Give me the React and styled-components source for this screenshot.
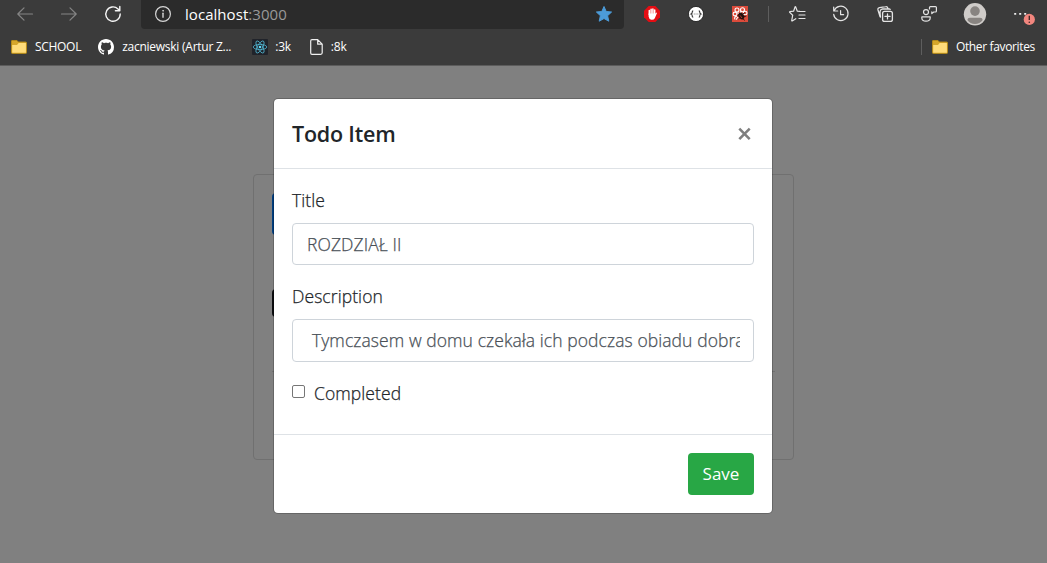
import React from "react";
import styled, { createGlobalStyle } from "styled-components";

const GlobalStyle = createGlobalStyle`
  * { box-sizing: border-box; }
  body {
    margin: 0;
    overflow: hidden;
    background: #808080;
    font-family: "Open Sans", "Noto Sans", sans-serif;
  }
`;

const Screen = styled.div`
  width: 1047px;
  height: 563px;
  display: flex;
  flex-direction: column;
  overflow: hidden;
`;

const Chrome = styled.header`
  height: 66px;
  flex: none;
  background: #3b3b3b;
  border-bottom: 1px solid #5c5c5c;
`;

const Toolbar = styled.div`
  height: 29px;
  display: flex;
  align-items: flex-start;
`;

const Slot = styled.span`
  width: ${(p) => p.$w}px;
  height: 28px;
  flex: none;
  display: flex;
  align-items: center;
  justify-content: center;
  svg { display: block; overflow: visible; }
`;

const NavGroup = styled.div`
  display: flex;
  width: 141px;
  padding-left: 3px;
`;

const AddressBar = styled.div`
  width: 483px;
  height: 29px;
  display: flex;
  align-items: center;
  padding: 0 0 1px 14px;
  background: #2b2b2b;
  border-radius: 0 0 4px 4px;
`;

const Url = styled.span`
  flex: 1;
  margin-left: 14px;
  font-size: 15px;
  line-height: 28px;
  letter-spacing: 0.05px;
  color: #fff;
  white-space: nowrap;
`;

const Port = styled.span`
  color: #999;
`;

const ToolGroup = styled.div`
  display: flex;
  padding-left: 6px;
`;

const Divider = styled.i`
  width: 1px;
  height: 16px;
  flex: none;
  background: #5e5e5e;
`;

const Bookmarks = styled.nav`
  height: 36px;
  display: flex;
  align-items: center;
  padding: 0 12px 0 11px;
  color: #fff;
`;

const Bookmark = styled.span`
  display: flex;
  align-items: center;
  gap: ${(p) => p.$gap ?? 8}px;
  margin-right: ${(p) => p.$after ?? 0}px;
  font-size: 12px;
  line-height: 16px;
  letter-spacing: ${(p) => p.$ls ?? 0}px;
  white-space: nowrap;
  svg { display: block; flex: none; }
`;

const Spacer = styled.span`
  flex: 1;
`;

const Page = styled.main`
  position: relative;
  flex: 1;
  padding: 108px 0 0 253px;
`;

const Card = styled.section`
  width: 541px;
  height: 286px;
  padding: 18px 18px 0;
  border: 1px solid #707070;
  border-radius: 4px;
`;

const AddTask = styled.div`
  width: 100px;
  height: 42px;
  border-radius: 4px;
  background: #003e80;
`;

const Tab = styled.div`
  width: 100px;
  height: 28px;
  margin-top: 54px;
  border-radius: 4px;
  background: #0a0c0e;
`;

const Rule = styled.div`
  height: 1px;
  margin-top: 54px;
  background: #707070;
`;

const Dialog = styled.div`
  position: absolute;
  top: 32px;
  left: 273px;
  width: 500px;
  height: 416px;
  display: flex;
  flex-direction: column;
  background: #fff;
  background-clip: padding-box;
  border: 1px solid rgba(0, 0, 0, 0.2);
  border-radius: 5px;
  color: #212529;
`;

const DialogHeader = styled.div`
  height: 70px;
  display: flex;
  align-items: center;
  justify-content: space-between;
  padding: 0 20px 0 18px;
  border-bottom: 1px solid #dee2e6;
`;

const Heading = styled.h5`
  margin: 0;
  font-size: 21.5px;
  line-height: 32px;
  font-weight: 600;
  letter-spacing: -0.2px;
`;

const DialogBody = styled.div`
  height: 265px;
  padding: 18px 18px 0;
  font-size: 17.5px;
  font-weight: 300;
  letter-spacing: 0.08px;
  -webkit-text-stroke: 0.25px currentColor;
`;

const Label = styled.label`
  display: block;
  height: 27px;
  margin-bottom: 9px;
  line-height: 27px;
`;

const Field = styled.div`
  height: ${(p) => p.$h ?? 42}px;
  margin-bottom: 18px;
  padding: 0 13px 0 14px;
  border: 1px solid #ced4da;
  border-radius: 4px;
`;

const Value = styled.div`
  overflow: hidden;
  padding-left: ${(p) => p.$indent ?? 0}px;
  line-height: 41px;
  color: #495057;
  white-space: pre;
`;

const CheckRow = styled.label`
  display: flex;
  align-items: center;
  height: 27px;
  line-height: 25px;
`;

const Box = styled.span`
  width: 13px;
  height: 13px;
  margin: 0 9px 5px 0;
  border: 1px solid #767676;
  border-radius: 2px;
`;

const DialogFooter = styled.div`
  flex: 1;
  display: flex;
  align-items: center;
  justify-content: flex-end;
  padding: 0 18px;
  border-top: 1px solid #dee2e6;
`;

const SaveButton = styled.button`
  width: 66px;
  height: 42px;
  padding: 0;
  border: 0;
  border-radius: 4px;
  background: #28a745;
  color: #fff;
  font: 17px/40px "Open Sans", sans-serif;
  letter-spacing: 0;
`;

const line = { fill: "none", stroke: "#e4e4e4", strokeWidth: 1.2, strokeLinecap: "round", strokeLinejoin: "round" };

const Arrow = ({ flip }) => (
  <svg width="16" height="14" viewBox="0 0 16 14" {...line} stroke="#858585" transform={flip ? "scale(-1 1)" : undefined}>
    <path d="M15.5 7H.8M7 .8.8 7 7 13.2" />
  </svg>
);

const Reload = () => (
  <svg width="16" height="16" viewBox="0 0 16 16" {...line} strokeWidth="1.4" stroke="#f5f5f5">
    <path d="M15.2 8A7.2 7.2 0 1 1 13 2.9L14.6 4.6M14.8.4V4.8H10.4" />
  </svg>
);

const Info = () => (
  <svg width="16" height="16" viewBox="0 0 16 16" {...line} stroke="#d6d6d6">
    <circle cx="8" cy="8" r="7.4" />
    <path d="M8 7.2V11.2" strokeWidth="1.4" />
    <circle cx="8" cy="4.8" r=".45" fill="#d6d6d6" strokeWidth=".8" />
  </svg>
);

const Star = () => (
  <svg width="16" height="16" viewBox="0 0 16 16">
    <path d="M8 .5 10.2 5.5 15.6 6 11.6 9.7 12.8 15.2 8 12.5 3.2 15.2 4.4 9.7.4 6 5.8 5.5Z" fill="#4c9bd8" stroke="#4c9bd8" strokeLinejoin="round" />
  </svg>
);

const Blocker = () => (
  <svg width="16" height="16" viewBox="0 0 16 16">
    <path d="M4.7 0h6.6L16 4.7v6.6L11.3 16H4.7L0 11.3V4.7Z" fill="#e40d13" />
    <path d="M5.3 8.6V4.5M7.1 8V3.2M8.9 8V2.9M10.7 8V4" stroke="#fff" strokeWidth="1.5" strokeLinecap="round" />
    <path d="M4.6 7.5h6.8l1-1.1q1 .2.4 1.2l-2 4.7Q10 13.8 8 13.8H7.4Q5 13.5 4.6 10.5Z" fill="#fff" />
  </svg>
);

const Braces = () => (
  <svg width="16" height="16" viewBox="0 0 16 16">
    <circle cx="8" cy="8" r="7.6" fill="#fff" stroke="#171717" strokeWidth=".8" />
    <path d="M5.2 4.9Q4.2 4.9 4.2 6.2T3.1 8Q4.2 8.2 4.2 9.7T5.2 11.1M10.8 4.9Q11.8 4.9 11.8 6.2T12.9 8Q11.8 8.2 11.8 9.7T10.8 11.1" fill="none" stroke="#333" strokeWidth="1.1" />
    <path d="M5.8 8h.9M7.6 8h.9M9.4 8h.9" stroke="#666" strokeWidth=".9" />
  </svg>
);

const BugTool = () => (
  <svg width="16" height="16" viewBox="0 0 16 16">
    <path d="M0 0h16v16H0Z" fill="#db4b3b" />
    <g fill="none" stroke="#fff" strokeWidth="1.1">
      <circle cx="5" cy="4" r="2" />
      <circle cx="10.5" cy="3.7" r="2" />
      <circle cx="3" cy="8" r="1.9" />
      <circle cx="13.2" cy="7" r="1.8" />
      <path d="M2.8 13.3Q2 10.5 5 10.2M5.2 6.7 7 7.6M8.5 5.2V7M4 13.7 6 11" />
    </g>
    <ellipse cx="9.3" cy="10" rx="2.6" ry="3.6" transform="rotate(-35 9.3 10)" fill="#24100e" />
    <path d="M5.5 9.5 7.5 10.3M6.4 13 8 11.8M11 7.8 13 6.7M11.5 10.5 14.2 10.2M11 12.5 12.5 14.5" stroke="#24100e" strokeWidth=".9" />
    <path d="M8 9.4 10 12" stroke="#db4b3b" strokeWidth=".8" />
  </svg>
);

const FavoritesIcon = () => (
  <svg width="17" height="16" viewBox="0 0 17 16" {...line}>
    <path d="M10.7 5.4 8.3 5.2 6.6.8Q6.4.3 6.1.8L4.6 5.2.8 5.7Q.3 5.9.7 6.3L3.7 9.2 2.7 14.6Q2.7 15.2 3.2 14.9L6.8 12.7M11 5.5h5M10 9h6M10 12.5h6" />
  </svg>
);

const HistoryIcon = () => (
  <svg width="16" height="16" viewBox="0 0 16 16" {...line}>
    <path d="M.7 1.1V5H4.7M1.2 4.6A7.2 7.2 0 1 1 .7 8.3M7.6 4.6V8.7H10.6" />
  </svg>
);

const CollectionsIcon = () => (
  <svg width="16" height="16" viewBox="0 0 16 16" {...line} strokeWidth="1.3">
    <rect x="5.6" y="5.4" width="9.8" height="10" rx="2" />
    <path d="M10.5 7.9v5M8 10.4h5M3.1 10.8 1 4Q.5 2.1 2.5 1.6L8.7.7Q10.4.4 11 2.5M3.5 11Q2.7 6.2 3.3 4.8 3.8 3.1 5.5 3H12Q13 3 13.2 3.5" />
  </svg>
);

const ShareIcon = () => (
  <svg width="16" height="16" viewBox="0 0 16 16" {...line}>
    <circle cx="5" cy="6.1" r="2.5" />
    <path d="M.9 10.8H9.2V12Q9 15.2 5 15.2T.8 12ZM8.5 3V1.6Q8.5.7 9.4.7H14.5Q15.4.7 15.4 1.6V5Q15.4 6 14.5 6H12.7L10.8 7.6V5.8" />
  </svg>
);

const Avatar = () => (
  <svg width="23" height="23" viewBox="0 0 23 23">
    <circle cx="11" cy="11.3" r="11.2" fill="#cfccc9" />
    <circle cx="11" cy="8.1" r="4.8" fill="#888481" />
    <path d="M3.3 17Q3.5 14.8 5.9 14.8H16.1Q18.5 14.8 18.7 17 15.8 20.9 11 20.9T3.3 17Z" fill="#888481" />
  </svg>
);

const MoreIcon = () => (
  <svg width="22" height="22" viewBox="0 0 22 22">
    <path d="M2.2 10.8h2M7.2 10.8h2M12.2 10.8h2" stroke="#eee" strokeWidth="1.8" />
    <circle cx="17.3" cy="16.4" r="5.6" fill="#f2867e" />
    <path d="M17.3 12.8v4.3" stroke="#3b2322" strokeWidth="1.3" />
    <circle cx="17.3" cy="19.2" r=".8" fill="#3b2322" />
  </svg>
);

const Folder = () => (
  <svg width="16" height="14" viewBox="0 0 16 14">
    <path d="M.5 1Q.5.5 1 .5H6L7.3 2H14.7Q15.5 2 15.5 2.7V12.7Q15.5 13.4 14.7 13.4H1.2Q.5 13.4.5 12.7Z" fill="#d6a62a" stroke="#b98d19" strokeWidth=".9" />
    <path d="M1.2 5H6L7.7 3H14.9V12.7H1.2Z" fill="#ffdc7a" />
  </svg>
);

const GitHub = () => (
  <svg width="16" height="16" viewBox="0 0 16 16" fill="#fff">
    <path d="M8 0C3.58 0 0 3.58 0 8c0 3.54 2.29 6.53 5.47 7.59.4.07.55-.17.55-.38 0-.19-.01-.82-.01-1.49-2.01.37-2.53-.49-2.69-.94-.09-.23-.48-.94-.82-1.13-.28-.15-.68-.52-.01-.53.63-.01 1.08.58 1.23.82.72 1.21 1.87.87 2.33.66.07-.52.28-.87.51-1.07-1.78-.2-3.64-.89-3.64-3.95 0-.87.31-1.59.82-2.15-.08-.2-.36-1.02.08-2.12 0 0 .67-.21 2.2.82.64-.18 1.32-.27 2-.27s1.36.09 2 .27c1.53-1.04 2.2-.82 2.2-.82.44 1.1.16 1.92.08 2.12.51.56.82 1.27.82 2.15 0 3.07-1.87 3.75-3.65 3.95.29.25.54.73.54 1.48 0 1.07-.01 1.93-.01 2.2 0 .21.15.46.55.38A8.01 8.01 0 0 0 16 8c0-4.42-3.58-8-8-8Z" />
  </svg>
);

const ReactLogo = () => (
  <svg width="16" height="16" viewBox="0 0 16 16">
    <rect width="16" height="16" rx="1" fill="#20232a" />
    <g fill="none" stroke="#50b5d0" strokeWidth=".8">
      <ellipse cx="8" cy="8" rx="6.8" ry="2.6" />
      <ellipse cx="8" cy="8" rx="6.8" ry="2.6" transform="rotate(60 8 8)" />
      <ellipse cx="8" cy="8" rx="6.8" ry="2.6" transform="rotate(120 8 8)" />
    </g>
    <circle cx="8" cy="8" r="1.3" fill="#61dafb" />
  </svg>
);

const FileIcon = () => (
  <svg width="13" height="16" viewBox="0 0 13 16" {...line} stroke="#f0f0f0">
    <path d="M2 .7H7.7L12.2 5.2V13.8Q12.2 15.3 10.7 15.3H2Q.7 15.3.7 14V2Q.7.7 2 .7ZM7.7.7V5.2H12.2" />
  </svg>
);

const CloseIcon = () => (
  <svg width="14" height="14" viewBox="0 0 14 14">
    <path d="M1.3 1.7 11.7 12.1M11.7 1.7 1.3 12.1" stroke="#7f7f7f" strokeWidth="2.6" />
  </svg>
);

export default function App() {
  return (
    <Screen>
      <GlobalStyle />
      <Chrome>
        <Toolbar>
          <NavGroup>
            <Slot $w={44}><Arrow /></Slot>
            <Slot $w={44}><Arrow flip /></Slot>
            <Slot $w={44}><Reload /></Slot>
          </NavGroup>
          <AddressBar>
            <Info />
            <Url>localhost<Port>:3000</Port></Url>
            <Slot $w={40}><Star /></Slot>
          </AddressBar>
          <ToolGroup>
            <Slot $w={44}><Blocker /></Slot>
            <Slot $w={44}><Braces /></Slot>
            <Slot $w={44}><BugTool /></Slot>
            <Slot $w={13}><Divider /></Slot>
            <Slot $w={44}><FavoritesIcon /></Slot>
            <Slot $w={44}><HistoryIcon /></Slot>
            <Slot $w={44}><CollectionsIcon /></Slot>
            <Slot $w={44}><ShareIcon /></Slot>
            <Slot $w={48}><Avatar /></Slot>
            <Slot $w={48}><MoreIcon /></Slot>
          </ToolGroup>
        </Toolbar>
        <Bookmarks>
          <Bookmark $after={17} $ls={-0.3}><Folder />SCHOOL</Bookmark>
          <Bookmark $after={21} $ls={-0.25}><GitHub />zacniewski (Artur Z...</Bookmark>
          <Bookmark $after={19} $gap={7} $ls={-0.3}><ReactLogo />:3k</Bookmark>
          <Bookmark $ls={-0.15}><FileIcon />:8k</Bookmark>
          <Spacer />
          <Slot $w={21}><Divider /></Slot>
          <Bookmark $ls={-0.35}><Folder />Other favorites</Bookmark>
        </Bookmarks>
      </Chrome>
      <Page>
        <Card>
          <AddTask />
          <Tab />
          <Rule />
        </Card>
        <Dialog>
          <DialogHeader>
            <Heading>Todo Item</Heading>
            <CloseIcon />
          </DialogHeader>
          <DialogBody>
            <Label>Title</Label>
            <Field><Value>ROZDZIAŁ II</Value></Field>
            <Label>Description</Label>
            <Field $h={43}><Value $indent={5}>Tymczasem w domu czekała ich podczas obiadu dobra nowina</Value></Field>
            <CheckRow><Box />Completed</CheckRow>
          </DialogBody>
          <DialogFooter>
            <SaveButton>Save</SaveButton>
          </DialogFooter>
        </Dialog>
      </Page>
    </Screen>
  );
}
